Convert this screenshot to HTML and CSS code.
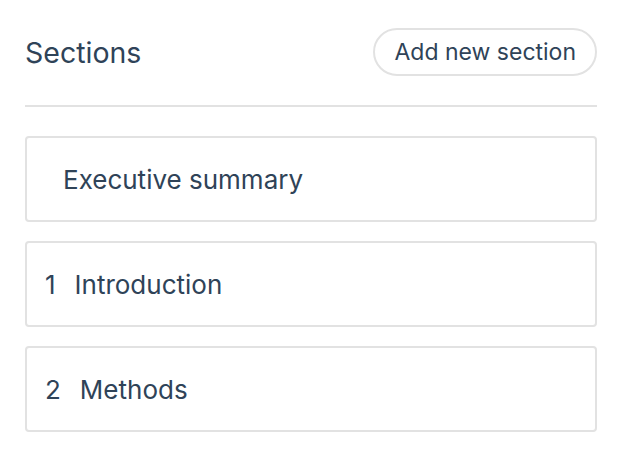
FILE: index.html
```html
<!DOCTYPE html>
<html lang="en">
<head>
  <meta charset="UTF-8">
  <meta name="viewport" content="width=device-width, initial-scale=1.0">
  <title>Sections</title>
  <link rel="stylesheet" href="styles.css">
</head>
<body>
  <div class="panel">
    <div class="panel-header">
      <h2>Sections</h2>
      <button class="add-btn">Add new section</button>
    </div>

    <ul class="section-list">
      <li class="section-item unnumbered">
        <span class="section-title">Executive summary</span>
      </li>
      <li class="section-item">
        <span class="section-num">1</span>
        <span class="section-title">Introduction</span>
      </li>
      <li class="section-item">
        <span class="section-num">2</span>
        <span class="section-title">Methods</span>
      </li>
    </ul>
  </div>
</body>
</html>
```

FILE: styles.css
```css
body {
  margin: 0;
  font-family: Inter, "Noto Sans", sans-serif;
  color: #2f4358;
  background: #fff;
}

.panel {
  padding: 28px 27px 0 25px;
}

.panel-header {
  display: flex;
  justify-content: space-between;
  align-items: center;
  padding-bottom: 29px;
  border-bottom: 2px solid #e2e2e2;
}

.panel-header h2 {
  margin: 0;
  font-size: 28.5px;
  font-weight: 400;
}

.add-btn {
  height: 48px;
  padding: 0 19px;
  font-family: inherit;
  font-size: 23px;
  color: #2f4358;
  background: #fff;
  border: 2px solid #e2e2e2;
  border-radius: 24px;
}

.section-list {
  list-style: none;
  margin: 29px 0 0;
  padding: 0;
  display: flex;
  flex-direction: column;
  gap: 19px;
}

.section-item {
  display: flex;
  align-items: center;
  height: 82px;
  padding: 0 18px;
  border: 2px solid #e2e2e2;
  border-radius: 4px;
  font-size: 26px;
}

.section-num {
  margin-right: 19px;
}

.unnumbered .section-title {
  margin-left: 18px;
}
```
